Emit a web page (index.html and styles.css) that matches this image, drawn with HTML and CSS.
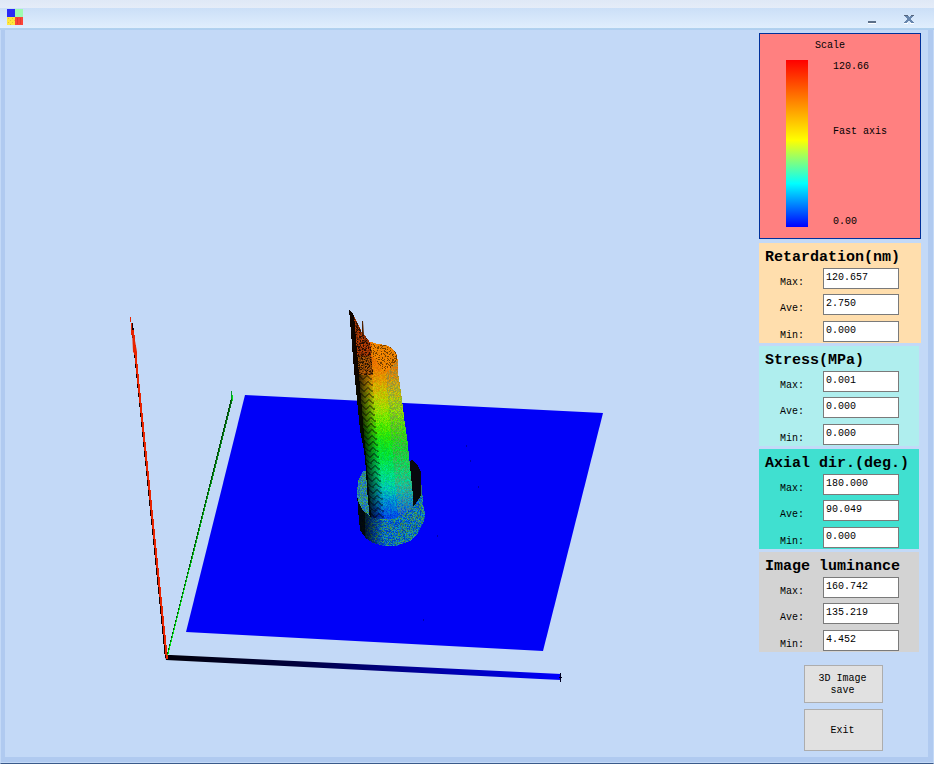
FILE: index.html
```html
<!DOCTYPE html>
<html lang="en">
<head>
<meta charset="utf-8">
<title>3D view</title>
<link rel="stylesheet" href="styles.css">
</head>
<body>
<div class="window">
  <header class="titlebar">
    <svg class="app-icon" viewBox="0 0 16 16" shape-rendering="crispEdges" aria-hidden="true">
      <path fill="#2a2af5" d="M0 0h8v8H0z"/>
      <path fill="#9dfab0" d="M8 0h8v8H8z"/>
      <path fill="#ffe63c" d="M0 8h8v8H0z"/>
      <path fill="#fb4438" d="M8 8h8v8H8z"/>
      <path fill="#e5c430" d="M1 9h1v1H1zM3 11h1v1H3zM5 13h1v1H5zM5 9h1v1H5zM1 13h1v1H1zM3 15h1v1H3zM7 11h1v1H7z"/>
      <path fill="#e23a34" d="M10 9h1v6h-1zM13 9h1v6h-1z"/>
    </svg>
    <div class="window-buttons">
      <button class="window-button" type="button" aria-label="Minimize">
        <svg viewBox="0 0 12 12" shape-rendering="crispEdges"><path fill="#5c6f88" d="M2 8h8v2H2z"/><path fill="#fff" d="M2 10h8v1H2z"/></svg>
      </button>
      <button class="window-button" type="button" aria-label="Close">
        <svg viewBox="0 0 12 12" shape-rendering="crispEdges"><path fill="#fff" d="M1 10h4v1H1zM7 10h4v1H7z"/><path fill="#6886ad" d="M1 2h4v1h1v1h1V3h1V2h3v1h-1v1H9v1H8v2h1v1h1v1h1v1H8V9H7V8H5v1H4v1H1V9h1V8h1V7h1V5H3V4H2V3H1z"/><path fill="#56657c" d="M1 2h4v1H1zM8 2h3v1H8z"/></svg>
      </button>
    </div>
  </header>
  <main class="content">
    <canvas class="scene" id="scene" width="754" height="727" role="img" aria-label="3D surface"></canvas>
    <aside class="sidebar">
      <section class="scale">
        <h2 class="scale-title">Scale</h2>
        <div class="scale-body">
          <div class="scale-bar"></div>
          <div class="scale-labels"><span>120.66</span><span>Fast axis</span><span>0.00</span></div>
        </div>
      </section>
      <section class="group group-retardation">
        <h2>Retardation(nm)</h2>
        <div class="fields">
          <label for="r-max">Max:</label><input id="r-max" value="120.657">
          <label for="r-ave">Ave:</label><input id="r-ave" value="2.750">
          <label for="r-min">Min:</label><input id="r-min" value="0.000">
        </div>
      </section>
      <section class="group group-stress">
        <h2>Stress(MPa)</h2>
        <div class="fields">
          <label for="s-max">Max:</label><input id="s-max" value="0.001">
          <label for="s-ave">Ave:</label><input id="s-ave" value="0.000">
          <label for="s-min">Min:</label><input id="s-min" value="0.000">
        </div>
      </section>
      <section class="group group-axial">
        <h2>Axial dir.(deg.)</h2>
        <div class="fields">
          <label for="a-max">Max:</label><input id="a-max" value="180.000">
          <label for="a-ave">Ave:</label><input id="a-ave" value="90.049">
          <label for="a-min">Min:</label><input id="a-min" value="0.000">
        </div>
      </section>
      <section class="group group-luminance">
        <h2>Image luminance</h2>
        <div class="fields">
          <label for="l-max">Max:</label><input id="l-max" value="160.742">
          <label for="l-ave">Ave:</label><input id="l-ave" value="135.219">
          <label for="l-min">Min:</label><input id="l-min" value="4.452">
        </div>
      </section>
      <div class="actions">
        <button class="action" type="button">3D Image<br>save</button>
        <button class="action action-exit" type="button">Exit</button>
      </div>
    </aside>
  </main>
</div>
<script src="scene.js"></script>
</body>
</html>
```
FILE: styles.css
```css
* {
  box-sizing: border-box;
}

body {
  margin: 0;
  color: #000;
  font: 10px/12px "Liberation Mono", monospace;
}

button,
input {
  font: inherit;
  color: inherit;
}

h2 {
  margin: 0;
}

.window {
  display: flex;
  flex-direction: column;
  min-height: 100vh;
  background: #b0caf0;
  border: solid #c3d9f7;
  border-width: 0 1px;
  border-bottom: 1px solid #3a5a8a;
  box-shadow: inset 0 -1px #c3d9f7;
}

.titlebar {
  display: flex;
  align-items: flex-start;
  justify-content: space-between;
  height: 30px;
  margin: 0 -1px;
  padding: 9px 19px 0 7px;
  background: linear-gradient(#dfe8f6 0, #e5ecf8 8px, #cbdff7 8px, #e0eefd 28px, #b0d3ee 28px, #b0cdf0 30px);
}

.app-icon {
  width: 16px;
  height: 16px;
}

.window-buttons {
  display: flex;
  gap: 25px;
  padding-top: 4px;
}

.window-button {
  width: 12px;
  height: 12px;
  padding: 0;
  border: 0;
  background: none;
}

.window-button svg {
  display: block;
}

.content {
  display: flex;
  flex: 1;
  margin: 0 5px 6px 4px;
  padding-right: 7px;
  background: #c3d9f7;
}

.scene {
  flex: 1;
  align-self: flex-start;
  min-width: 0;
}

.sidebar {
  display: flex;
  flex-direction: column;
  gap: 3px;
  width: 162px;
  padding-top: 3px;
}

.scale {
  height: 206px;
  margin-bottom: 1px;
  padding-top: 6px;
  border: 1px solid #00309a;
  background: #ff8080;
}

.scale-title {
  padding-right: 20px;
  font-size: 10px;
  font-weight: normal;
  line-height: 12px;
  text-align: center;
}

.scale-body {
  display: flex;
  gap: 25px;
  padding: 8px 0 0 26px;
}

.scale-bar {
  width: 22px;
  height: 167px;
  background: linear-gradient(#f00 0%, #ff0 48%, #0ff 74%, #00f 100%);
}

.scale-labels {
  display: flex;
  flex-direction: column;
  justify-content: space-between;
  margin: 1px 0 -1px;
}

.scale-labels span:nth-child(2) {
  padding-bottom: 26px;
}

.group {
  height: 100px;
  width: 160px;
  padding-left: 6px;
}

.group h2 {
  height: 25px;
  padding-top: 6px;
  font-size: 15px;
  line-height: 18px;
  white-space: nowrap;
}

.fields {
  display: grid;
  grid-template-columns: 43px 76px;
  grid-template-rows: 26px 27px 21px;
  align-items: start;
  padding-left: 15px;
}

.fields label {
  padding-top: 9px;
}

.fields input {
  width: 76px;
  height: 21px;
  padding: 0 2px 2px;
  border: 1px solid #7a7a7a;
  background: #fff;
}

.group-retardation {
  width: 162px;
  background: #ffdead;
}

.group-stress {
  background: #afeeee;
}

.group-axial {
  background: #40e0d0;
}

.group-luminance {
  background: #d3d3d3;
}

.actions {
  display: flex;
  flex-direction: column;
  gap: 6px;
  padding: 10px 38px 0 45px;
}

.action {
  height: 38px;
  padding: 2px 2px 0 0;
  border: 1px solid #adadad;
  background: #e1e1e1;
}

.action-exit {
  height: 42px;
}
```
FILE: scene.js
```javascript
const ctx = document.getElementById("scene").getContext("2d");

// World coordinates are window coordinates; the canvas starts at (5, 30).
ctx.translate(-5, -30);

let seed = 7;
function random() {
  seed = (seed * 1664525 + 1013904223) >>> 0;
  return seed / 4294967296;
}

function polygon(points, fill) {
  ctx.beginPath();
  points.forEach(([x, y]) => ctx.lineTo(x, y));
  ctx.closePath();
  ctx.fillStyle = fill;
  ctx.fill();
}

function gradient(x0, y0, x1, y1, ...colors) {
  const g = ctx.createLinearGradient(x0, y0, x1, y1);
  colors.forEach((c, i) => g.addColorStop(i / (colors.length - 1), c));
  return g;
}

// Piecewise linear lookup in rows of [key, ...values].
function lookup(table, key) {
  if (key <= table[0][0]) return table[0].slice(1);
  for (let i = 1; i < table.length; i++) {
    if (key <= table[i][0]) {
      const a = table[i - 1], b = table[i];
      const t = (key - a[0]) / (b[0] - a[0]);
      return a.slice(1).map((v, k) => v + (b[k + 1] - v) * t);
    }
  }
  return table[table.length - 1].slice(1);
}

function dot(x, y, rgb, light) {
  ctx.fillStyle = "rgb(" + rgb.map(v => Math.round(Math.min(255, v * light))).join(",") + ")";
  ctx.fillRect(x, y, 1, 1);
}

// A line drawn row by row, without smoothing.
function steepLine(x0, y0, x1, y1, width, colorAt) {
  for (let y = y0; y < y1; y++) {
    const t = (y - y0) / (y1 - y0);
    ctx.fillStyle = colorAt(t);
    ctx.fillRect(Math.round(x0 + (x1 - x0) * t), y, width, 1);
  }
}

// Base plane
polygon([[245, 395], [603, 413], [543, 651], [186, 632]], "#0000f8");
ctx.fillStyle = "#0000a8";
[[466, 445], [470, 460], [478, 486], [423, 619], [437, 535]].forEach(([x, y]) => ctx.fillRect(x, y, 1, 2));

// Axes
polygon([[165, 655], [171, 655], [561, 674], [561, 680], [540, 679], [166, 660]],
  gradient(166, 0, 561, 0, "#000008", "#00003c", "#0000a0", "#0000ff"));
ctx.fillStyle = "#000020";
ctx.fillRect(560, 673, 1, 9);
ctx.fillRect(559, 677, 3, 1);
steepLine(231, 398, 166, 657, 1, () => "#004a08");
steepLine(232, 398, 167, 655, 1, t => `rgb(0, ${Math.round(110 + t * 130)}, 20)`);
ctx.fillStyle = "#00962a";
ctx.fillRect(231, 391, 1, 8);
ctx.fillStyle = "#00e010";
ctx.fillRect(232, 395, 1, 6);
steepLine(131, 323, 165, 658, 2, () => "#180000");
steepLine(132, 330, 166, 659, 2, () => "#e82400");
ctx.fillStyle = "#e82400";
ctx.fillRect(130, 317, 1, 5);
ctx.fillRect(131, 323, 1, 12);
polygon([[132, 330], [134, 335], [137, 352], [137, 356], [133, 352]], "#e82400");

// Ring at the foot of the column
const ringLeft = [[460, 411], [464, 404], [471, 363], [480, 358], [492, 357], [510, 358], [530, 360], [538, 366], [542, 372], [545, 382], [547, 392]];
const ringRight = [[460, 413], [464, 417], [470, 420], [484, 421], [505, 423], [516, 425], [524, 422], [534, 417], [540, 411], [544, 400], [547, 393]];
const rim = [[356, 494], [358, 502], [362, 510], [370, 516], [382, 520], [392, 519], [404, 513], [414, 505], [421, 494], [426, 480]];
for (let y = 460; y < 546; y++) {
  const x0 = lookup(ringLeft, y)[0], x1 = lookup(ringRight, y)[0];
  for (let x = Math.round(x0); x < x1; x++) {
    const r = random();
    const u = (x - 358) / 67;
    if (y < lookup(rim, x)[0]) {
      if (x > 405) {
        dot(x, y, x > 420 ? [50, 110, 120] : [8, 8, 14], 1);
      } else {
        dot(x, y, r < 0.3 ? [70, 165, 80] : r < 0.65 ? [45, 160, 180] : [30, 110, 215], 0.85 + random() * 0.15);
      }
    } else {
      const light = u < 0.1 ? 0.08 : Math.min(1, 0.25 + (u - 0.1) * 2.6);
      let rgb = [0, 85, 235];
      if (r < 0.12 + u * 0.25) rgb = [70, 165, 100];
      else if (r < 0.42 + u * 0.3) rgb = [15, 155, 205];
      dot(x, y, rgb, light * (0.75 + random() * 0.25));
    }
  }
}

// Column
const columnLeft = [[310, 349], [320, 350], [345, 352], [370, 354], [400, 357], [430, 360], [450, 364], [470, 366], [490, 367], [520, 370]];
const columnRight = [[310, 350], [314, 353], [320, 356], [324, 358], [331, 361], [337, 366], [341, 369], [343, 376], [345, 387], [348, 392], [353, 396], [358, 397], [375, 398], [395, 401], [420, 404], [440, 407], [460, 409], [490, 412], [520, 414]];
const heightColors = [
  [310, 230, 20, 0], [350, 255, 110, 0], [370, 250, 135, 0], [385, 235, 180, 0],
  [400, 195, 225, 0], [415, 140, 245, 0], [430, 60, 245, 0], [450, 5, 240, 45],
  [470, 0, 240, 120], [485, 0, 225, 180], [498, 0, 165, 220], [512, 0, 100, 240], [520, 0, 60, 245]
];
for (let y = 310; y < 519; y++) {
  const x0 = lookup(columnLeft, y)[0], x1 = lookup(columnRight, y)[0];
  const axis = 356 + (y - 345) * 0.085;
  for (let x = Math.round(x0); x < x1; x++) {
    if (y > lookup(rim, x)[0]) continue;
    const d = x - axis;
    let light = d < 0 ? 0.05 : Math.min(1, 0.25 + d / 18);
    let rgb = lookup(heightColors, y + (random() - 0.5) * 16);
    if (d > 0 && d < 13 && (y + Math.abs(d % 8 - 4)) % 6 < 2) light *= 0.6;
    if (y < 375 && d < 14) {
      rgb = [225, 75, 5];
      light = random() < 0.25 ? 0.2 : 0.45 + random() * 0.5;
      if (d < 0) light = 0.07;
      else if (y > 355) rgb = [215, 105, 5];
    }
    const capBottom = 373 - Math.abs(x - 386) * 1.2;
    const cap = x > 370 && y < capBottom;
    if (cap) {
      rgb = [255, 140, 0];
      light = random() < 0.25 ? 0.5 : 1;
    } else if (d > 27 && random() < 0.6) {
      rgb = rgb.map((v, i) => v * 0.65 + [60, 80, 55][i]);
      light *= 0.85;
    }
    dot(x, y, rgb, light * (0.86 + random() * 0.14));
  }
}
polygon([[362, 335], [362, 321], [363, 321], [364, 335]], "#502000");
```
